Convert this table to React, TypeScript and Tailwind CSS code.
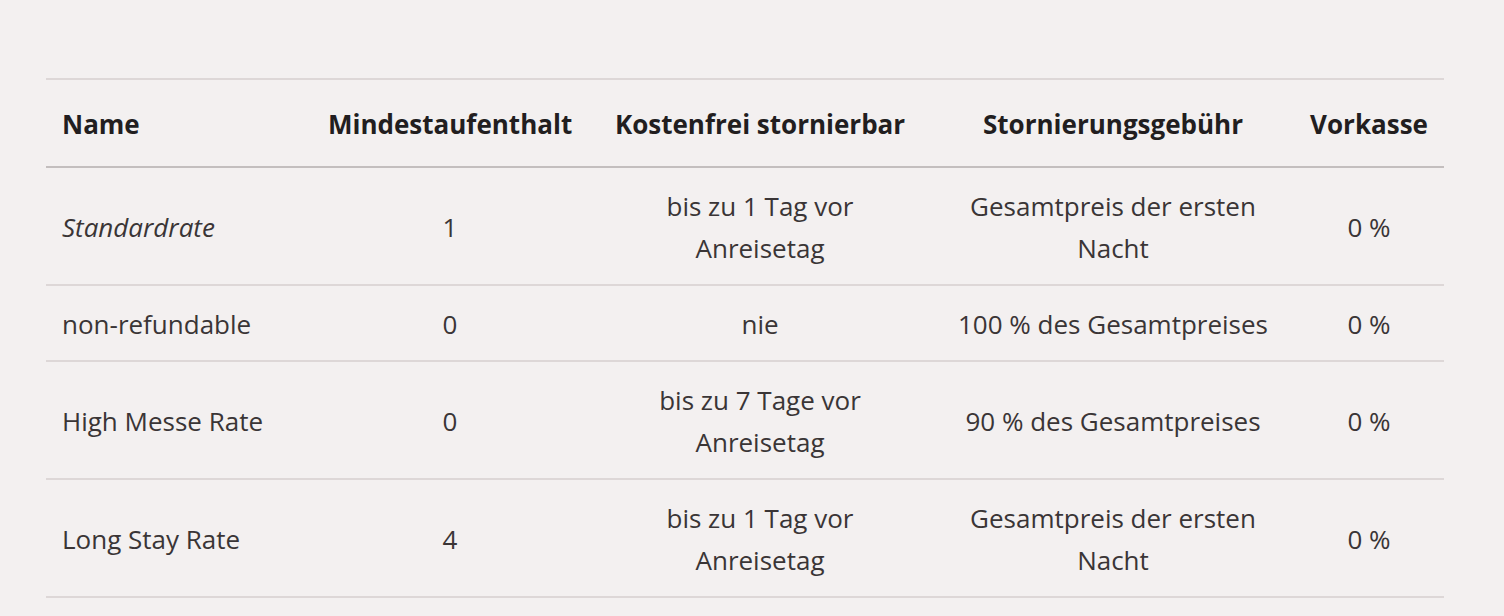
const rows = [
  { name: "Standardrate", italic: true, min: "1", free: ["bis zu 1 Tag vor", "Anreisetag"], fee: ["Gesamtpreis der ersten", "Nacht"], pre: "0 %" },
  { name: "non-refundable", italic: false, min: "0", free: ["nie"], fee: ["100 % des Gesamtpreises"], pre: "0 %" },
  { name: "High Messe Rate", italic: false, min: "0", free: ["bis zu 7 Tage vor", "Anreisetag"], fee: ["90 % des Gesamtpreises"], pre: "0 %" },
  { name: "Long Stay Rate", italic: false, min: "4", free: ["bis zu 1 Tag vor", "Anreisetag"], fee: ["Gesamtpreis der ersten", "Nacht"], pre: "0 %" },
];

export default function App() {
  return (
    <div
      className="min-h-[616px] w-full bg-[#f3f0f0] pt-[78px] pl-[46px] pr-[60px] text-[#3a3536]"
      style={{ fontFamily: '"Open Sans", sans-serif' }}
    >
      <table className="w-full table-fixed border-collapse text-[26px] leading-[42px]">
        <colgroup>
          <col className="w-[266px]" />
          <col className="w-[276px]" />
          <col className="w-[344px]" />
          <col className="w-[362px]" />
          <col className="w-[150px]" />
        </colgroup>
        <thead>
          <tr className="border-t-2 border-b-2 border-t-[#ddd7d7] border-b-[#c3bebe] text-[#221e1f]">
            <th className="px-4 pt-[23px] pb-[20px] text-left font-bold leading-[43px]">Name</th>
            <th className="px-4 pt-[23px] pb-[20px] text-center font-bold leading-[43px]">Mindestaufenthalt</th>
            <th className="px-4 pt-[23px] pb-[20px] text-center font-bold leading-[43px] whitespace-nowrap">Kostenfrei stornierbar</th>
            <th className="px-4 pt-[23px] pb-[20px] text-center font-bold leading-[43px]">Stornierungsgebühr</th>
            <th className="px-4 pt-[23px] pb-[20px] text-center font-bold leading-[43px]">Vorkasse</th>
          </tr>
        </thead>
        <tbody>
          {rows.map((r) => (
            <tr key={r.name} className="border-b-2 border-b-[#ddd7d7]">
              <td className={`px-4 pt-[17px] pb-[15px] text-left ${r.italic ? "italic" : ""}`}>{r.name}</td>
              <td className="px-4 pt-[17px] pb-[15px] text-center">{r.min}</td>
              <td className="px-4 pt-[17px] pb-[15px] text-center">
                {r.free.map((l) => (
                  <div key={l}>{l}</div>
                ))}
              </td>
              <td className="px-4 pt-[17px] pb-[15px] text-center">
                {r.fee.map((l) => (
                  <div key={l}>{l}</div>
                ))}
              </td>
              <td className="px-4 pt-[17px] pb-[15px] text-center">{r.pre}</td>
            </tr>
          ))}
        </tbody>
      </table>
    </div>
  );
}
